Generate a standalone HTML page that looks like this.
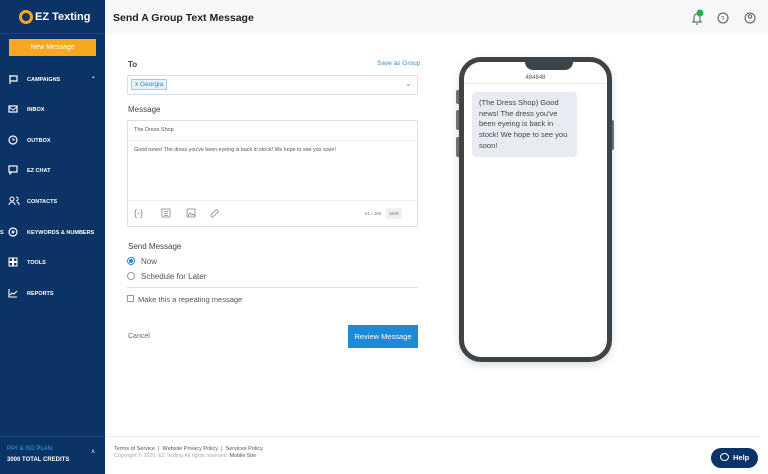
<!DOCTYPE html><html><head><style>
*{margin:0;padding:0;box-sizing:border-box}
body{width:768px;height:474px;overflow:hidden;font-family:"Liberation Sans",sans-serif;background:#fff;position:relative;color:#333}
.sb{position:absolute;left:0;top:0;width:105px;height:474px;background:#0b3366}
.a{position:absolute}
.nav{position:absolute;left:0;width:105px;height:20px;color:#fff;font-size:5.5px;font-weight:bold}
.nav span{position:absolute;left:27px;top:8px}
.nav svg{position:absolute;left:8px;top:5px}
.t{font-size:8px;color:#444}
</style></head><body>
<div class="sb">
 <div class="a" style="left:19px;top:10px;width:14px;height:14px;border-radius:50%;border:3px solid #f6a821"></div>
 <div class="a" style="left:35px;top:11px;color:#fff;font-weight:bold;font-size:11px">EZ Texting</div>
 <div class="a" style="left:0;top:33px;width:105px;height:1px;background:#1c467a"></div>
 <div class="a" style="left:9px;top:39px;width:87px;height:17px;background:#f6a821;color:#fff;font-size:7px;text-align:center;line-height:17px">New Message</div>
 <div class="nav" style="top:69px"><svg width="10" height="10"><path d="M2 1v9M2 2h7v5H2" stroke="#fff" fill="none" stroke-width="1.2"/></svg><span>CAMPAIGNS</span><span style="left:91px;top:5px">⌄</span></div>
 <div class="nav" style="top:99px"><svg width="10" height="10"><rect x="1" y="2" width="8" height="6" stroke="#fff" fill="none" stroke-width="1.2"/><path d="M1 3l4 3 4-3" stroke="#fff" fill="none"/></svg><span>INBOX</span></div>
 <div class="nav" style="top:130px"><svg width="10" height="10"><circle cx="5" cy="5" r="4" stroke="#fff" fill="none" stroke-width="1.2"/><path d="M5 3v2h2" stroke="#fff" fill="none"/></svg><span>OUTBOX</span></div>
 <div class="nav" style="top:160px"><svg width="10" height="10"><rect x="1" y="1" width="8" height="6" stroke="#fff" fill="none" stroke-width="1.2"/><path d="M2 7v2l2-2" stroke="#fff" fill="none"/></svg><span>EZ CHAT</span></div>
 <div class="nav" style="top:191px"><svg width="12" height="10"><circle cx="4" cy="3" r="2" stroke="#fff" fill="none"/><path d="M1 9a3 3 0 0 1 6 0M8 1a2 2 0 0 1 0 4M9 6a3 3 0 0 1 2 3" stroke="#fff" fill="none"/></svg><span>CONTACTS</span></div>
 <div class="nav" style="top:222px"><svg width="10" height="10"><circle cx="5" cy="5" r="4" stroke="#fff" fill="none" stroke-width="1.2"/><circle cx="5" cy="5" r="1.5" fill="#fff"/></svg><span>KEYWORDS &amp; NUMBERS</span><span style="left:0">S</span></div>
 <div class="nav" style="top:252px"><svg width="10" height="10"><rect x="1" y="1" width="3.5" height="3.5" stroke="#fff" fill="none"/><rect x="5.5" y="1" width="3.5" height="3.5" stroke="#fff" fill="none"/><rect x="1" y="5.5" width="3.5" height="3.5" stroke="#fff" fill="none"/><rect x="5.5" y="5.5" width="3.5" height="3.5" stroke="#fff" fill="none"/></svg><span>TOOLS</span></div>
 <div class="nav" style="top:283px"><svg width="10" height="10"><path d="M1 1v8h8M2 7l2-2 2 1 3-3" stroke="#fff" fill="none" stroke-width="1.1"/></svg><span>REPORTS</span></div>
 <div class="a" style="left:0;top:436px;width:105px;height:1px;background:#1c467a"></div>
 <div class="a" style="left:7px;top:446px;color:#3aa0e8;font-size:6px">PAY &amp; GO PLAN</div>
 <div class="a" style="left:7px;top:457px;color:#fff;font-size:6px;font-weight:bold">3000 TOTAL CREDITS</div>
 <div class="a" style="left:91px;top:449px;color:#fff;font-size:7px">˄</div>
</div>
<div class="a" style="left:105px;top:0;width:663px;height:34px;background:#f6f7f8"></div>
<div class="a" style="left:113px;top:12px;font-size:10.5px;font-weight:bold;color:#222">Send A Group Text Message</div>
<svg class="a" style="left:688px;top:9px" width="80" height="18"><path d="M4 13h10M6 13V8a3 3 0 0 1 6 0v5M8 15h2" stroke="#555" fill="none"/><circle cx="12" cy="4" r="3.5" fill="#23b04a"/><circle cx="35" cy="9" r="5" stroke="#555" fill="none"/><text x="33" y="11.5" font-size="6" fill="#555" font-family="Liberation Sans">?</text><circle cx="62" cy="9" r="5" stroke="#555" fill="none"/><circle cx="62" cy="7.5" r="1.7" stroke="#555" fill="none"/></svg>
<div class="a t" style="left:128px;top:60px;font-weight:bold">To</div>
<div class="a" style="left:377px;top:60px;font-size:6.5px;color:#3a8fd0">Save as Group</div>
<div class="a" style="left:127px;top:75px;width:291px;height:20px;border:1px solid #dde0e3;border-radius:2px"></div>
<div class="a" style="left:131px;top:79px;height:11px;border:1px solid #a9cbe8;background:#e8f2fb;color:#3a7fc0;font-size:6.5px;padding:1px 3px;line-height:8px">x Georgia</div>
<div class="a" style="left:405px;top:79px;font-size:8px;color:#888">⌄</div>
<div class="a t" style="left:128px;top:105px">Message</div>
<div class="a" style="left:127px;top:120px;width:291px;height:107px;border:1px solid #dde0e3;border-radius:2px"></div>
<div class="a" style="left:128px;top:140px;width:289px;height:1px;background:#f0f1f2"></div>
<div class="a" style="left:128px;top:200px;width:289px;height:1px;background:#eceef0"></div>
<div class="a" style="left:134px;top:127px;font-size:5.5px;color:#555">The Dress Shop</div>
<div class="a" style="left:134px;top:147px;font-size:5.3px;color:#555">Good news! The dress you've been eyeing is back in stock! We hope to see you soon!</div>
<svg class="a" style="left:134px;top:207px" width="90" height="12" stroke="#888" fill="none" stroke-width=".8"><text x="0" y="9" font-size="9" fill="#888" stroke="none" font-family="Liberation Sans">{-}</text><rect x="28" y="2" width="8" height="8"/><path d="M30 4.5h4M30 6.5h4M30 8.5h4"/><rect x="53" y="2" width="8" height="8"/><path d="M54 9l2-3 2 2 1-1 2 2"/><path d="M79 10l5-5a1.5 1.5 0 0 0-2-2l-5 5a1.5 1.5 0 0 0 2 2"/></svg>
<div class="a" style="left:365px;top:211px;font-size:4.5px;color:#777">61 / 160</div>
<div class="a" style="left:386px;top:208px;width:16px;height:11px;background:#eef0f2;font-size:4.5px;color:#777;text-align:center;line-height:11px">SMS</div>
<div class="a t" style="left:128px;top:242px">Send Message</div>
<div class="a" style="left:127px;top:257px;width:8px;height:8px;border-radius:50%;border:1px solid #2a8ad6;background:radial-gradient(#2a8ad6 45%,#fff 50%)"></div>
<div class="a t" style="left:141px;top:257px;color:#555">Now</div>
<div class="a" style="left:127px;top:272px;width:8px;height:8px;border-radius:50%;border:1px solid #999"></div>
<div class="a t" style="left:141px;top:272px;color:#555">Schedule for Later</div>
<div class="a" style="left:127px;top:287px;width:291px;height:1px;background:#dde0e3"></div>
<div class="a" style="left:127px;top:295px;width:7px;height:7px;border:1px solid #999"></div>
<div class="a t" style="left:138px;top:294.5px;color:#555;font-size:7.5px">Make this a repeating message</div>
<div class="a" style="left:128px;top:333px;font-size:7px;color:#666">Cancel</div>
<div class="a" style="left:348px;top:325px;width:70px;height:23px;background:#1c8ad8;color:#fff;font-size:7.5px;text-align:center;line-height:23px">Review Message</div>
<div class="a" style="left:456px;top:90px;width:5px;height:14px;background:#777;border-radius:2px"></div>
<div class="a" style="left:456px;top:110px;width:5px;height:20px;background:#777;border-radius:2px"></div>
<div class="a" style="left:456px;top:137px;width:5px;height:20px;background:#777;border-radius:2px"></div>
<div class="a" style="left:609px;top:120px;width:5px;height:30px;background:#777;border-radius:2px"></div>
<div class="a" style="left:459px;top:57px;width:153px;height:305px;border:5px solid #3e4347;border-radius:22px;background:#fff;box-shadow:0 3px 8px rgba(0,0,0,.15)"></div>
<div class="a" style="left:525px;top:60px;width:48px;height:10px;background:#3e4347;border-radius:0 0 8px 8px"></div>
<div class="a" style="left:464px;top:72px;width:143px;height:12px;border-bottom:1px solid #eee;font-size:6px;color:#555;text-align:center;line-height:12px">484848</div>
<div class="a" style="left:472px;top:92px;width:105px;height:65px;background:#e8ecf2;border-radius:4px;padding:6px 7px;font-size:7.5px;line-height:10.7px;color:#444">(The Dress Shop) Good news! The dress you've been eyeing is back in stock! We hope to see you soon!</div>
<div class="a" style="left:105px;top:436px;width:655px;height:1px;background:#eee"></div>
<div class="a" style="left:114px;top:446px;font-size:5.5px;color:#555">Terms of Service &nbsp;| &nbsp;Website Privacy Policy &nbsp;| &nbsp;Services Policy</div>
<div class="a" style="left:114px;top:453px;font-size:5.3px;color:#aaa">Copyright © 2020, EZ Texting All rights reserved. <span style="color:#555">Mobile Site</span></div>
<div class="a" style="left:711px;top:448px;width:47px;height:20px;background:#0b3366;border-radius:10px;color:#fff;font-size:7.5px;font-weight:bold;line-height:20px;padding-left:22px">Help</div>
<div class="a" style="left:720px;top:453px;width:9px;height:8px;border:1.3px solid #fff;border-radius:50%"></div>
</body></html>
